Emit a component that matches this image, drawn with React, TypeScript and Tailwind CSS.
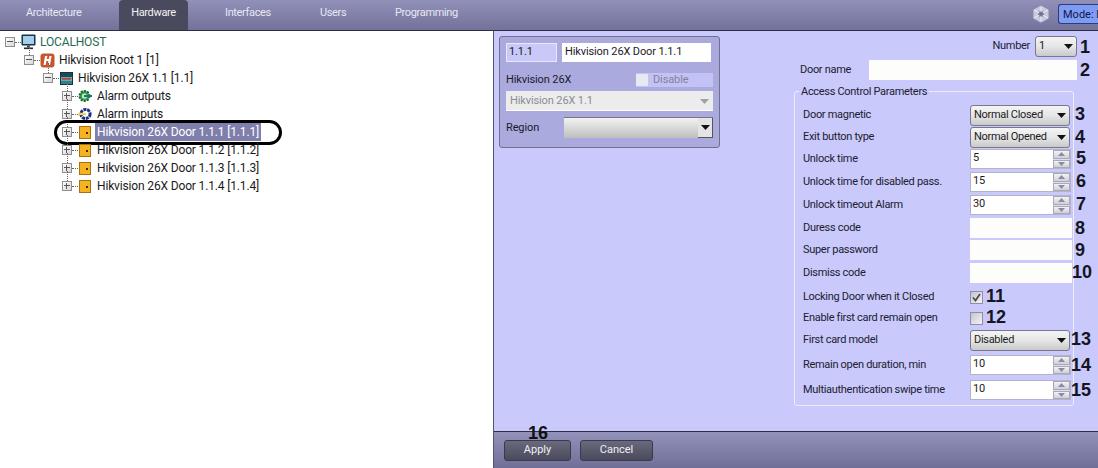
import React from "react";

const Caret = () => (
  <svg width="9" height="5" viewBox="0 0 9 5" className="shrink-0"><path d="M0 0h9L4.5 5z" fill="#111" /></svg>
);

const Combo = ({ value, w = "w-[100px]" }: { value: string; w?: string }) => (
  <div className={`${w} h-[21px] shrink-0 flex items-center justify-between pl-[3px] pr-[3px] rounded-[3px] border border-[#77778f] bg-gradient-to-b from-[#f4f4f4] via-[#e6e6e6] to-[#c9c9c9] text-[#1c1c1c]`}>
    <span>{value}</span>
    <Caret />
  </div>
);

const Spin = ({ value }: { value: string }) => (
  <div className="w-[101px] h-[20px] shrink-0 flex bg-white border border-[#b4b4c8]">
    <span className="flex-1 pl-[2px] leading-[15px] text-[#1c1c1c]">{value}</span>
    <div className="w-[17px] flex flex-col gap-[1px] bg-[#dcdcec]">
      <div className="flex-1 flex items-center justify-center bg-gradient-to-b from-[#f3f3f3] to-[#cfcfdc] border border-[#a8a8b8]">
        <svg width="7" height="4" viewBox="0 0 7 4"><path d="M3.5 0L7 4H0z" fill="#8a8aa0" /></svg>
      </div>
      <div className="flex-1 flex items-center justify-center bg-gradient-to-b from-[#f3f3f3] to-[#cfcfdc] border border-[#a8a8b8]">
        <svg width="7" height="4" viewBox="0 0 7 4"><path d="M0 0h7L3.5 4z" fill="#8a8aa0" /></svg>
      </div>
    </div>
  </div>
);

const Input = () => <div className="w-[102px] h-[20px] shrink-0 bg-[#fdfdfb]" />;

const Num = ({ n, cls = "ml-[6px]" }: { n: string; cls?: string }) => (
  <span className={`${cls} font-bold text-[18px] leading-none tracking-normal text-[#15151f]`} style={{ fontFamily: '"Liberation Sans", Arial, sans-serif' }}>{n}</span>
);

const Check = ({ on }: { on?: boolean }) => (
  <div className="w-[13px] h-[13px] shrink-0 bg-gradient-to-br from-[#c4c4cc] to-[#f4f4f8] border border-[#8f8fa0] flex items-center justify-center">
    {on && (
      <svg width="11" height="11" viewBox="0 0 11 11"><path d="M2 5.5l2.5 3L9 2" fill="none" stroke="#4a4a58" strokeWidth="1.8" /></svg>
    )}
  </div>
);

const Expander = ({ open, line }: { open?: boolean; line?: string }) => (
  <div className="relative w-[10px] h-[10px] shrink-0 border border-[#8f8f8f] bg-gradient-to-br from-white to-[#d6d6d6] flex items-center justify-center">
    {line && <div className={`absolute left-[4px] bottom-[9px] w-0 border-l border-dotted border-[#666] ${line}`} />}
    <div className="absolute left-[1px] top-[3px] w-[6px] h-px bg-[#555]" />
    {!open && <div className="absolute left-[3px] top-[1px] w-px h-[6px] bg-[#555]" />}
    <div className="absolute left-[9px] top-[4px] w-[6px] border-t border-dotted border-[#666]" />
  </div>
);

const PcIcon = () => (
  <svg width="15" height="16" viewBox="0 0 15 16" className="shrink-0">
    <rect x="0.5" y="0.5" width="14" height="11" rx="1" fill="#16344e" />
    <rect x="2" y="2" width="11" height="8" fill="#a6d0ea" />
    <rect x="6" y="11.5" width="3" height="2" fill="#33475a" />
    <rect x="3" y="13.5" width="9" height="1.6" fill="#1d2b38" />
  </svg>
);
const RootIcon = () => (
  <svg width="15" height="15" viewBox="0 0 15 15" className="shrink-0">
    <rect x="0.5" y="0.5" width="14" height="14" rx="3" fill="#c8552c" />
    <path d="M5 3h2.4l-.6 3h2L9.4 3h2.2L10 12H7.8l.6-4h-2l-.7 4H3.5z" fill="#fff" />
  </svg>
);
const DeviceIcon = () => (
  <svg width="13" height="13" viewBox="0 0 13 13" className="shrink-0">
    <rect x="0.5" y="0.5" width="12" height="12" fill="#5ab3b6" stroke="#16343c" />
    <rect x="1" y="1" width="11" height="4" fill="#1d4a55" />
    <rect x="2" y="6" width="9" height="1.6" fill="#c23838" />
    <rect x="1" y="9" width="11" height="3" fill="#3a7f88" />
  </svg>
);
const OutIcon = () => (
  <svg width="14" height="14" viewBox="0 0 14 14" className="shrink-0">
    <circle cx="6.5" cy="7" r="5" fill="#3aa14a" stroke="#1b6b2a" strokeWidth="2" strokeDasharray="2 1.2" />
    <circle cx="6.5" cy="7" r="2.6" fill="#bfe8c4" />
    <path d="M6 7h8" stroke="#1f6f8c" strokeWidth="2" />
  </svg>
);
const InIcon = () => (
  <svg width="14" height="14" viewBox="0 0 14 14" className="shrink-0">
    <circle cx="7.5" cy="7" r="4.6" fill="none" stroke="#1c2f80" strokeWidth="3" strokeDasharray="3 0.8" />
    <path d="M0 7h8" stroke="#e8d860" strokeWidth="2.2" />
  </svg>
);
const DoorIcon = () => (
  <svg width="12" height="13" viewBox="0 0 12 13" className="shrink-0">
    <rect x="0.5" y="0.5" width="11" height="12" fill="#f5b321" stroke="#a9700f" />
    <rect x="7" y="6" width="2" height="2" fill="#3a2a08" />
  </svg>
);

type Node = { level: number; label: string; icon: React.ReactNode; open?: boolean; line?: string; sel?: boolean; green?: boolean };

const nodes: Node[] = [
  { level: 0, label: "LOCALHOST", icon: <PcIcon />, open: true, green: true },
  { level: 1, label: "Hikvision Root 1 [1]", icon: <RootIcon />, open: true, line: "h-[10px]" },
  { level: 2, label: "Hikvision 26X 1.1 [1.1]", icon: <DeviceIcon />, open: true, line: "h-[10px]" },
  { level: 3, label: "Alarm outputs", icon: <OutIcon />, line: "h-[10px]" },
  { level: 3, label: "Alarm inputs", icon: <InIcon />, line: "h-[10px]" },
  { level: 3, label: "Hikvision 26X Door 1.1.1 [1.1.1]", icon: <DoorIcon />, line: "h-[10px]", sel: true },
  { level: 3, label: "Hikvision 26X Door 1.1.2 [1.1.2]", icon: <DoorIcon />, line: "h-[10px]" },
  { level: 3, label: "Hikvision 26X Door 1.1.3 [1.1.3]", icon: <DoorIcon />, line: "h-[10px]" },
  { level: 3, label: "Hikvision 26X Door 1.1.4 [1.1.4]", icon: <DoorIcon />, line: "h-[10px]" },
];

const indent = ["pl-[5px]", "pl-[24px]", "pl-[43px]", "pl-[62px]"];

const TreeRow = ({ n }: { n: Node }) => (
  <div className={`relative h-[18px] flex items-center text-[12px] tracking-[-0.15px] ${indent[n.level]}`}>
    <Expander open={n.open} line={n.line} />
    <div className="flex items-center justify-center shrink-0 w-[16px] ml-[5px] mr-[2px]">{n.icon}</div>
    <span className={`h-[18px] leading-[18px] px-[2px] whitespace-nowrap ${n.sel ? "bg-[#7f7fac] text-white" : n.green ? "text-[#1f6b4c]" : "text-[#1a1a1a]"}`}>
      {n.label}
    </span>
    {n.sel && <div className="absolute left-[54px] top-[-3px] w-[228px] h-[25px] rounded-full border-[3px] border-black" />}
  </div>
);

const tabs = [
  { t: "Architecture", cls: "w-[119px] pl-[26px]" },
  { t: "Hardware", cls: "w-[69px] justify-center bg-[#4a4a5e] rounded-t-[4px] text-[#f2f2f2]" },
  { t: "Interfaces", cls: "w-[132px] pl-[37px]" },
  { t: "Users", cls: "w-[75px] pl-[0px]" },
  { t: "Programming", cls: "w-[120px] pl-[0px]" },
];

const up = "-mt-[2px] ";

const rows: { label: string; mt: string; c: React.ReactNode }[] = [
  { label: "Door magnetic", mt: "mt-0", c: <><Combo value="Normal Closed" /><Num n="3" cls={up + "ml-[5px]"} /></> },
  { label: "Exit button type", mt: "mt-[2px]", c: <><Combo value="Normal Opened" /><Num n="4" cls="ml-[5px]" /></> },
  { label: "Unlock time", mt: "mt-[2px]", c: <><Spin value="5" /><Num n="5" cls={up + "ml-[5px]"} /></> },
  { label: "Unlock time for disabled pass.", mt: "mt-[3px]", c: <><Spin value="15" /><Num n="6" cls={up + "ml-[5px]"} /></> },
  { label: "Unlock timeout Alarm", mt: "mt-[3px]", c: <><Spin value="30" /><Num n="7" cls={up + "ml-[5px]"} /></> },
  { label: "Duress code", mt: "mt-[3px]", c: <><Input /><Num n="8" cls="ml-[3px]" /></> },
  { label: "Super password", mt: "mt-[2px]", c: <><Input /><Num n="9" cls="ml-[3px]" /></> },
  { label: "Dismiss code", mt: "mt-[3px]", c: <><Input /><Num n="10" cls={up + "ml-0"} /></> },
  { label: "Locking Door when it Closed", mt: "mt-[4px]", c: <><Check on /><Num n="11" cls={up + "ml-[3px]"} /></> },
  { label: "Enable first card remain open", mt: "mt-[1px]", c: <><Check /><Num n="12" cls={up + "ml-[3px]"} /></> },
  { label: "First card model", mt: "mt-[2px]", c: <><Combo value="Disabled" /><Num n="13" cls={up + "ml-[1px]"} /></> },
  { label: "Remain open duration, min", mt: "mt-[5px]", c: <><Spin value="10" /><Num n="14" cls="ml-0" /></> },
  { label: "Multiauthentication swipe time", mt: "mt-[5px]", c: <><Spin value="10" /><Num n="15" cls="ml-0" /></> },
];

const DarkBtn = ({ t, w, badge }: { t: string; w: string; badge?: string }) => (
  <div className={`relative ${w} h-[21px] flex items-center justify-center rounded-[3px] border border-[#3a3a4a] bg-gradient-to-b from-[#6a6a7e] to-[#4a4a5c] text-[#f0f0f0]`}>
    {badge && <span className="absolute left-[23px] top-[-17px] font-bold text-[18px] leading-none text-[#111]" style={{ fontFamily: '"Liberation Sans", Arial, sans-serif' }}>{badge}</span>}
    {t}
  </div>
);

export default function App() {
  return (
    <div className="w-[1098px] h-[468px] overflow-hidden flex flex-col text-[11px] bg-white" style={{ fontFamily: 'Roboto, "Liberation Sans", Arial, sans-serif' }}>
      <div className="h-[31px] shrink-0 flex justify-between bg-gradient-to-b from-[#9090b8] to-[#72729a] border-b border-[#2e2e44]">
        <div className="flex text-[#e8e8f4] tracking-[-0.35px]">
          {tabs.map((t) => (
            <div key={t.t} className={`flex items-center pb-[3px] ${t.cls}`}>{t.t}</div>
          ))}
        </div>
        <div className="flex items-center gap-[7px] pb-[2px]">
          <svg width="20" height="20" viewBox="0 0 20 20">
            <path d="M10 1l8 4.5v9L10 19l-8-4.5v-9z" fill="#c9c9de" stroke="#8a8ab0" />
            <circle cx="10" cy="10" r="3" fill="#7c7ca0" />
            <path d="M10 3v14M3 6l14 8M17 6L3 14" stroke="#ebebf5" strokeWidth="1" />
            <circle cx="10" cy="10" r="2" fill="#6f6f94" />
          </svg>
          <div className="w-[40px] h-[20px] overflow-hidden whitespace-nowrap pl-[4px] leading-[20px] rounded-l-[3px] border border-r-0 border-[#2c3c78] bg-[#7f9cf5] text-[#10184a]">Mode: Default</div>
        </div>
      </div>

      <div className="flex-1 flex min-h-0">
        <div className="w-[493px] shrink-0 bg-white pt-[2px]">
          {nodes.map((n) => <TreeRow key={n.label} n={n} />)}
        </div>
        <div className="w-px bg-[#55556a]" />
        <div className="flex-1 flex flex-col min-w-0">
          <div className="flex-1 flex bg-[#c9c9fb] min-h-0">
            <div className="w-[221px] h-[112px] ml-[5px] mt-[5px] shrink-0 rounded-[3px] border border-[#70708c] bg-[#aaaadf] px-[6px] pt-[6px] text-[#1a1a2a] tracking-[-0.12px] flex flex-col">
              <div className="flex gap-[5px] h-[19px]">
                <div className="w-[51px] pl-[2px] leading-[16px] bg-[#c9c9f8] border border-[#e8e8fa]">1.1.1</div>
                <div className="w-[149px] pl-[3px] leading-[18px] bg-white">Hikvision 26X Door 1.1.1</div>
              </div>
              <div className="flex items-center justify-between h-[14px] mt-[11px]">
                <span>Hikvision 26X</span>
                <div className="w-[77px] h-[14px] flex items-center gap-[5px] bg-[#c2c2f4] text-[#82829c]">
                  <div className="w-[12px] h-[12px] bg-[#e8e8f2]" />Disable
                </div>
              </div>
              <div className="h-[20px] mt-[4px] flex items-center justify-between pl-[4px] pr-[4px] pt-[2px] bg-[#ececec] border-b border-white text-[#8b8b95]">
                <span>Hikvision 26X 1.1</span>
                <svg width="9" height="5" viewBox="0 0 9 5"><path d="M0 0h9L4.5 5z" fill="#a0a0aa" /></svg>
              </div>
              <div className="flex items-center justify-between h-[21px] mt-[6px]">
                <span className="pt-[2px]">Region</span>
                <div className="w-[149px] h-[21px] flex justify-end bg-gradient-to-b from-[#f2f2f2] to-[#bfbfbf] border-t border-[#777]">
                  <div className="w-[15px] flex items-center justify-center bg-[#e4e4e4] border-r border-b border-[#555]"><Caret /></div>
                </div>
              </div>
            </div>

            <div className="w-[308px] ml-[70px] shrink-0 flex flex-col pt-[5px] text-[#202030] tracking-[-0.3px]">
              <div className="h-[21px] flex items-center justify-end pr-[8px]">
                <span className="mr-[5px]">Number</span>
                <Combo value="1" w="w-[42px]" />
                <Num n="1" cls="ml-[3px] w-[10px]" />
              </div>
              <div className="h-[20px] mt-[3px] flex items-center">
                <span className="w-[79px] pl-[10px]">Door name</span>
                <div className="w-[208px] h-[20px] bg-[#fdfdfb]" />
                <Num n="2" cls="ml-[3px]" />
              </div>
              <div className="relative w-[280px] h-[315px] ml-[4px] mt-[11px] rounded-[3px] border border-[#ecedfb] pl-[8px] pt-[13px]">
                <span className="absolute left-[4px] top-[-7px] px-[2px] leading-[13px] bg-[#c9c9fb]">Access Control Parameters</span>
                {rows.map((r) => (
                  <div key={r.label} className={`h-[20px] flex items-center whitespace-nowrap ${r.mt}`}>
                    <span className="w-[167px] shrink-0">{r.label}</span>
                    {r.c}
                  </div>
                ))}
              </div>
            </div>
          </div>
          <div className="h-[37px] shrink-0 flex gap-[9px] pl-[10px] pt-[8px] border-t border-[#2e2e44] bg-gradient-to-b from-[#9292ba] to-[#6f6f97]">
            <DarkBtn t="Apply" w="w-[67px]" badge="16" />
            <DarkBtn t="Cancel" w="w-[73px]" />
          </div>
        </div>
      </div>
    </div>
  );
}
